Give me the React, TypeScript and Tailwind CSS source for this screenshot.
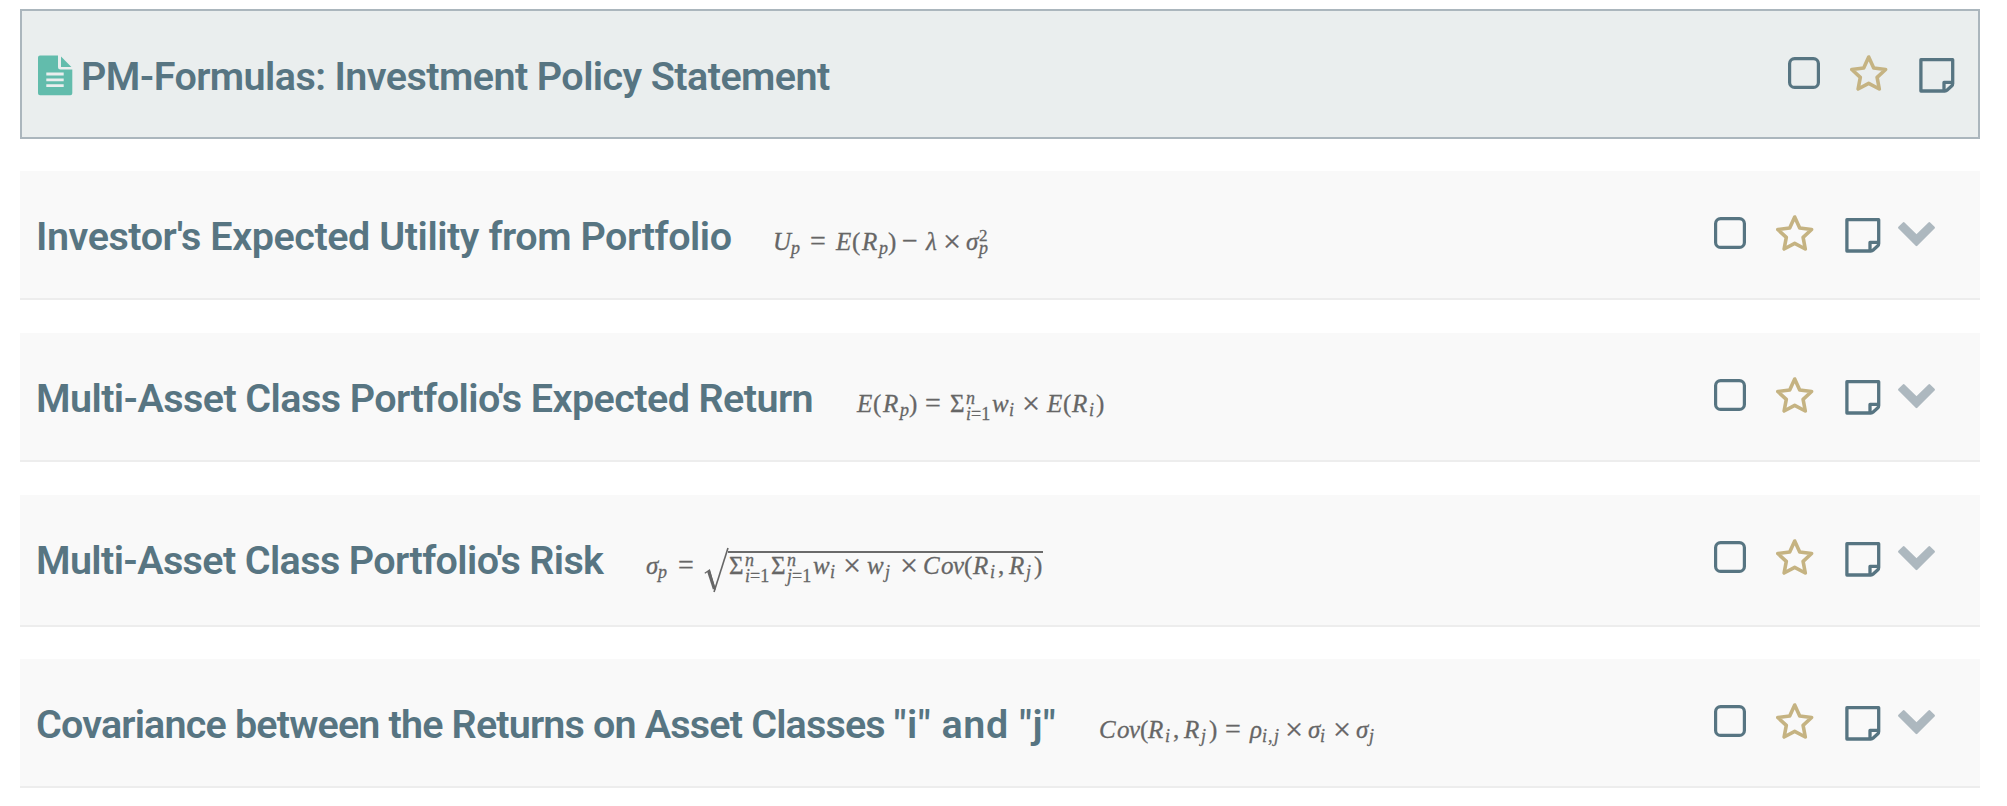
import type { ReactNode } from "react";

type Tok = [text: string, width: string, kind?: "rm" | "sub" | "sup" | "subrm" | "op" | "times"];

const kinds = {
  it: "text-[25px] italic leading-none",
  rm: "text-[25px] leading-none",
  op: "text-[28px] leading-[25px]",
  times: "text-[32px] leading-[20px] translate-x-[-1px] translate-y-[2px]",
  sub: "text-[18px] italic leading-[12px] translate-y-[4px]",
  subrm: "text-[18px] leading-[12px] translate-y-[4px]",
  sup: "text-[17px] leading-[12px] translate-y-[-9px]",
};

function Toks({ items }: { items: Tok[] }) {
  return (
    <>
      {items.map(([text, width, kind], i) => (
        <span key={i} className={`shrink-0 ${kinds[kind ?? "it"]} ${width}`}>
          {text}
        </span>
      ))}
    </>
  );
}

function Limits({ top, low }: { top: string; low: string }) {
  return (
    <>
      <span className="w-0 shrink-0 translate-y-[-8px] text-[18px] italic leading-[14px]">{top}</span>
      <span className="w-[26px] shrink-0 translate-y-[8px] text-[18px] leading-[14px]">
        <i>{low}</i>=1
      </span>
    </>
  );
}

const utility = (
  <Toks
    items={[
      ["U", "w-[18px]"], ["p", "w-[19px]", "sub"], ["=", "w-[26px]", "op"],
      ["E", "w-[16px]"], ["(", "w-[10px]", "rm"], ["R", "w-[17px]"], ["p", "w-[9px]", "sub"],
      [")", "w-[14px]", "rm"], ["−", "w-[24px]", "op"], ["λ", "w-[18px]"], ["×", "w-[22px]", "times"],
      ["σ", "w-[13px]"], ["2", "w-0", "sup"], ["p", "w-[9px]", "sub"],
    ]}
  />
);

const expectedReturn = (
  <>
    <Toks
      items={[
        ["E", "w-[16px]"], ["(", "w-[10px]", "rm"], ["R", "w-[17px]"], ["p", "w-[9px]", "sub"],
        [")", "w-[16px]", "rm"], ["=", "w-[25px]", "op"], ["Σ", "w-[16px]", "rm"],
      ]}
    />
    <Limits top="n" low="i" />
    <Toks
      items={[
        ["w", "w-[17px]"], ["i", "w-[14px]", "sub"], ["×", "w-[24px]", "times"], ["E", "w-[16px]"],
        ["(", "w-[9px]", "rm"], ["R", "w-[17px]"], ["i", "w-[7px]", "sub"], [")", "w-[8px]", "rm"],
      ]}
    />
  </>
);

const risk = (
  <>
    <Toks items={[["σ", "w-[12px]"], ["p", "w-[20px]", "sub"], ["=", "w-[26px]", "op"]]} />
    <svg className="mt-[-22px] h-[46px] w-[25px] shrink-0 translate-y-[19px]" viewBox="0 0 25 46" fill="none">
      <path d="M0.8 26.3L5.5 23L11 43" stroke="#666" strokeWidth="1.3" />
      <path d="M4.5 24L10.3 42" stroke="#666" strokeWidth="3" />
      <path d="M10 45L24 1" stroke="#666" strokeWidth="1.6" />
    </svg>
    <span className="ml-[-1px] flex h-[24px] shrink-0 items-baseline border-t-2 border-[#6b6b6b] pl-[1px]">
      <Toks items={[["Σ", "w-[16px]", "rm"]]} />
      <Limits top="n" low="i" />
      <Toks items={[["Σ", "w-[16px]", "rm"]]} />
      <Limits top="n" low="j" />
      <Toks
        items={[
          ["w", "w-[17px]"], ["i", "w-[14px]", "sub"], ["×", "w-[23px]", "times"],
          ["w", "w-[18px]"], ["j", "w-[16px]", "sub"], ["×", "w-[22px]", "times"],
          ["C", "w-[18px]"], ["o", "w-[12px]"], ["v", "w-[11px]"], ["(", "w-[9px]", "rm"],
          ["R", "w-[17px]"], ["i", "w-[8px]", "sub"], [",", "w-[11px]", "rm"],
          ["R", "w-[17px]"], ["j", "w-[8px]", "sub"], [")", "w-[9px]", "rm"],
        ]}
      />
    </span>
  </>
);

const covariance = (
  <Toks
    items={[
      ["C", "w-[18px]"], ["o", "w-[12px]"], ["v", "w-[11px]"], ["(", "w-[8px]", "rm"],
      ["R", "w-[17px]"], ["i", "w-[8px]", "sub"], [",", "w-[11px]", "rm"], ["R", "w-[17px]"],
      ["j", "w-[8px]", "sub"], [")", "w-[16px]", "rm"], ["=", "w-[25px]", "op"], ["ρ", "w-[12px]"],
      ["i", "w-[6px]", "sub"], [",", "w-[6px]", "subrm"], ["j", "w-[12px]", "sub"], ["×", "w-[22px]", "times"],
      ["σ", "w-[12px]"], ["i", "w-[14px]", "sub"], ["×", "w-[22px]", "times"], ["σ", "w-[13px]"],
      ["j", "w-[8px]", "sub"],
    ]}
  />
);

function DocIcon() {
  return (
    <svg className="h-[41px] w-[35px] shrink-0" viewBox="0 0 35 41">
      <path
        d="M2 .4H20V12.2Q20 14.6 22.4 14.6H34.3V38.3Q34.3 40.3 32.3 40.3H2Q0 40.3 0 38.3V2.4Q0 .4 2 .4Z"
        fill="#62bcac"
      />
      <path d="M23 1.6L33.4 12H23Z" fill="#62bcac" />
      <path d="M8.3 19H25.7M8.3 24.8H25.7M8.3 30.6H25.7" stroke="#eaeeee" strokeWidth="2.8" />
    </svg>
  );
}

function Actions() {
  return (
    <>
      <svg className="mt-[2px] h-8 w-8" viewBox="0 0 32 32" fill="none">
        <rect x="1.6" y="1.6" width="28.8" height="28.8" rx="5" stroke="#577582" strokeWidth="3.2" />
      </svg>
      <svg className="ml-[30px] h-[36px] w-[38px]" viewBox="0 0 38 36" fill="none">
        <path
          d="M18.7 2L23.7 13L35.6 14.5L27.1 22.4L29.3 34L18.7 28.4L8.1 34L10.3 22.4L1.8 14.5L13.7 13Z"
          stroke="#c5b382"
          strokeWidth="3.6"
          strokeLinejoin="round"
        />
      </svg>
      <svg className="ml-[31px] mt-[3px] h-[35px] w-[36px]" viewBox="0 0 36 35" fill="none">
        <path
          d="M1.9 1.7H33.7V25.5Q33.7 27 32.6 28L28.2 32Q27.2 33 25.8 33H1.9Z M33.7 24.4H25V33"
          stroke="#577582"
          strokeWidth="3.3"
          strokeLinejoin="round"
        />
      </svg>
    </>
  );
}

function Chevron() {
  return (
    <svg className="ml-[17px] mt-[7px] h-[25px] w-[38px]" viewBox="0 0 38 25">
      <path
        d="M5.7 1.3L1.3 5.7L18.5 23L35.7 5.7L31.3 1.3L18.5 13.8Z"
        fill="#adb8bf"
        stroke="#adb8bf"
        strokeWidth="2.4"
        strokeLinejoin="round"
      />
    </svg>
  );
}

const titleClass = "shrink-0 whitespace-nowrap font-['Roboto',sans-serif] text-[39.5px] font-semibold leading-[50px] text-[#577582]";

function Row({ className, title, titleStyle, children }: {
  className: string; title: ReactNode; titleStyle: string; children: ReactNode;
}) {
  return (
    <section className={`flex items-start border-b-2 border-[#ededed] bg-[#f9f9f9] pl-[16px] pr-[44px] ${className}`}>
      <div className="mt-[41px] flex h-[50px] items-baseline">
        <h2 className={`${titleClass} ${titleStyle}`}>{title}</h2>
        <div className="flex items-baseline font-['Liberation_Serif',serif] text-[#666] [-webkit-text-stroke:0.3px_#666]">
          {children}
        </div>
      </div>
      <div className="ml-auto mt-[44px] flex items-start">
        <Actions />
        <Chevron />
      </div>
    </section>
  );
}

export default function App() {
  return (
    <main className="h-[806px] w-[2007px] overflow-hidden bg-white pl-[20px] pr-[27px] pt-[9px]">
      <section className="flex h-[130px] items-start border-2 border-[#abb6bd] bg-[#eaeeee] pl-[16px] pr-[23px]">
        <div className="mt-[44px]">
          <DocIcon />
        </div>
        <h1 className={`${titleClass} ml-[8px] mt-[41px] tracking-[-0.57px]`}>PM-Formulas: Investment Policy Statement</h1>
        <div className="ml-auto mt-[44px] flex items-start">
          <Actions />
        </div>
      </section>
      <Row className="mt-[32px] h-[129px]" title="Investor's Expected Utility from Portfolio" titleStyle="tracking-[-0.44px] w-[737px]">
        {utility}
      </Row>
      <Row className="mt-[33px] h-[129px]" title="Multi-Asset Class Portfolio's Expected Return" titleStyle="tracking-[-0.57px] w-[821px]">
        {expectedReturn}
      </Row>
      <Row className="mt-[33px] h-[132px]" title="Multi-Asset Class Portfolio's Risk" titleStyle="tracking-[-0.62px] w-[610px]">
        {risk}
      </Row>
      <Row
        className="mt-[32px] h-[129px]"
        title={
          <>
            Covariance between the Returns on Asset Classes{" "}
            <span className="tracking-[0.6px]">"i" and "j"</span>
          </>
        }
        titleStyle="tracking-[-0.83px] w-[1063px]"
      >
        {covariance}
      </Row>
    </main>
  );
}
